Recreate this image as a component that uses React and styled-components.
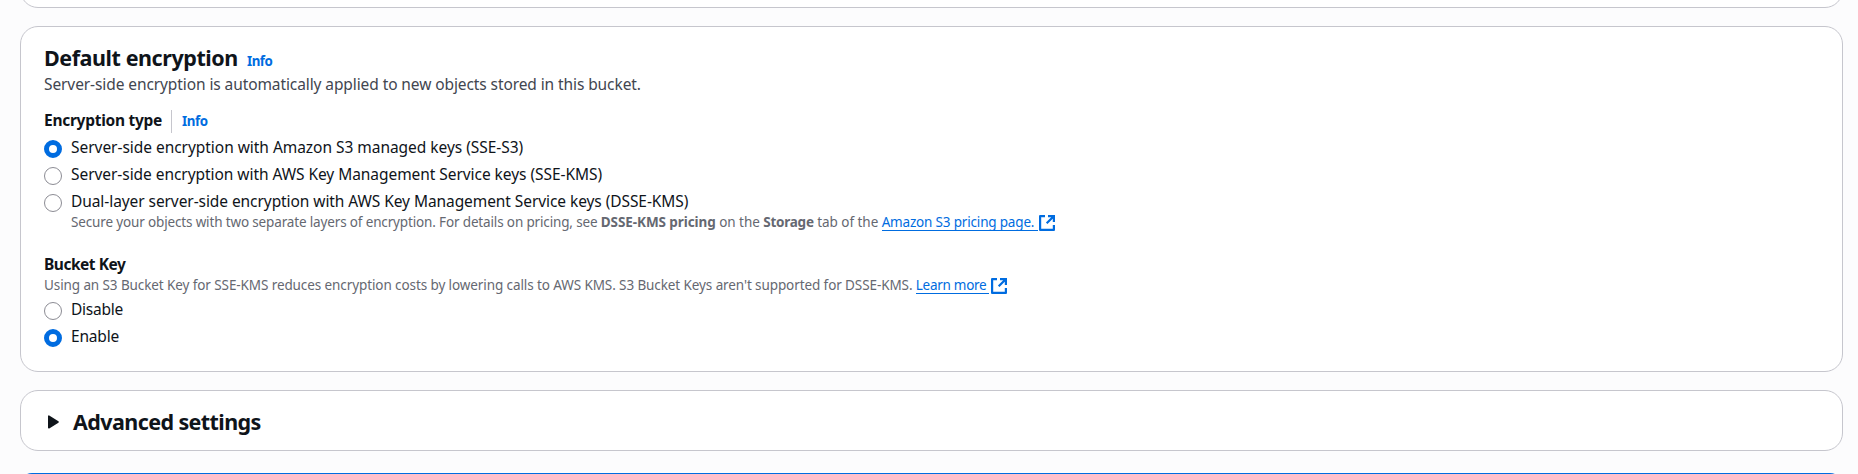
import React from "react";
import styled, { createGlobalStyle } from "styled-components";

const Global = createGlobalStyle`
  body {
    margin: 0;
    background: #fcfcfd;
    color: #0f141a;
    font-family: "Noto Sans", sans-serif;
    overflow: hidden;
  }
`;

const Page = styled.main`
  display: flex;
  flex-direction: column;
  height: 474px;
  overflow: hidden;
  padding: 0 15px 0 20px;
  box-sizing: border-box;
`;

const Panel = styled.section`
  flex: none;
  box-sizing: border-box;
  height: ${(p) => p.$height}px;
  margin-top: ${(p) => p.$gap}px;
  padding: ${(p) => p.$padding || "0"};
  background: #ffffff;
  border: 1px solid #c6c6cd;
  border-radius: 18px;
`;

const HeadingRow = styled.div`
  display: flex;
  align-items: baseline;
  gap: 9px;
`;

const Heading = styled.h2`
  margin: 0;
  font-size: 21.5px;
  line-height: 27px;
  font-weight: 700;
  letter-spacing: ${(p) => p.$tracking}px;
  white-space: nowrap;
`;

const InfoLink = styled.a`
  color: #006ce0;
  font-size: 13.3px;
  line-height: 18px;
  font-weight: 700;
  letter-spacing: -0.43px;
`;

const Description = styled.p`
  margin: 2px 0 14px;
  color: #424650;
  font-size: 15.5px;
  line-height: 22px;
  letter-spacing: -0.095px;
`;

const FieldLabel = styled.div`
  display: flex;
  align-items: baseline;
  height: 22px;
  font-size: 15.5px;
  line-height: 22px;
  font-weight: 700;
  letter-spacing: ${(p) => p.$tracking}px;
`;

const Divider = styled.span`
  align-self: flex-start;
  width: 1px;
  height: 23px;
  margin: 1px 10px 0 9px;
  background: #c6c6cd;
`;

const Options = styled.div`
  display: flex;
  flex-direction: column;
  gap: 5px;
  margin-top: ${(p) => p.$top}px;
`;

const Option = styled.label`
  display: flex;
  align-items: flex-start;
  gap: 9px;
`;

const Radio = styled.span`
  flex: none;
  box-sizing: border-box;
  width: 18px;
  height: 18px;
  margin-top: 4px;
  border-radius: 50%;
  background: #ffffff;
  border: ${(p) => (p.$checked ? "5.5px solid #006ce0" : "1px solid #8c8c94")};
`;

const OptionText = styled.div`
  font-size: 15.5px;
  line-height: 22px;
  letter-spacing: ${(p) => p.$tracking}px;
  white-space: nowrap;
`;

const Hint = styled.div`
  display: flex;
  height: 18px;
  margin-top: 1px;
  color: #656871;
  font-size: 13.5px;
  line-height: 18px;
  white-space: pre;
`;

const Run = styled.span`
  font-weight: ${(p) => (p.$bold ? 700 : 400)};
  letter-spacing: ${(p) => p.$tracking}px;
`;

const LinkText = styled.a`
  box-sizing: border-box;
  height: 18px;
  width: ${(p) => p.$width}px;
  color: #006ce0;
  border-bottom: 1px solid #006ce0;
  letter-spacing: ${(p) => p.$tracking}px;
`;

const IconSlot = styled.svg`
  flex: none;
  width: 16px;
  height: 16px;
  margin: 2px 0 0 ${(p) => p.$gap}px;
`;

const Group = styled.div`
  margin-top: ${(p) => p.$top}px;
`;

const ExpandRow = styled.div`
  display: flex;
  align-items: center;
  gap: 14px;
`;

const Caret = styled.svg`
  width: 12px;
  height: 14px;
  margin-top: 1px;
`;

const Banner = styled.div`
  flex: none;
  height: 24px;
  margin: 22px 1px 0 0;
  background: #006ce0;
  border-radius: 12px;
`;

function ExternalIcon({ gap }) {
  return (
    <IconSlot $gap={gap} viewBox="0 0 16 16" fill="none" stroke="#006ce0" strokeWidth="2.2">
      <path d="M6 1.1H1.1v13.8h13.8V10" strokeLinejoin="round" />
      <path d="M9 1.1h5.9V7M14.7 1.3L7.7 8.3" />
    </IconSlot>
  );
}

function RadioOption({ checked, tracking, label, children }) {
  return (
    <Option>
      <Radio $checked={checked} />
      <div>
        <OptionText $tracking={tracking}>{label}</OptionText>
        {children}
      </div>
    </Option>
  );
}

export default function App() {
  return (
    <>
      <Global />
      <Page>
        <Panel $height={48} $gap={-40} />
        <Panel $height={346} $gap={18} $padding="17px 23px">
          <HeadingRow>
            <Heading $tracking={-0.43}>Default encryption</Heading>
            <InfoLink>Info</InfoLink>
          </HeadingRow>
          <Description>
            Server-side encryption is automatically applied to new objects stored in this bucket.
          </Description>

          <FieldLabel $tracking={-0.27}>
            Encryption type
            <Divider />
            <InfoLink>Info</InfoLink>
          </FieldLabel>
          <Options $top={5}>
            <RadioOption
              checked
              tracking={-0.038}
              label="Server-side encryption with Amazon S3 managed keys (SSE-S3)"
            />
            <RadioOption
              tracking={-0.055}
              label="Server-side encryption with AWS Key Management Service keys (SSE-KMS)"
            />
            <RadioOption
              tracking={-0.075}
              label="Dual-layer server-side encryption with AWS Key Management Service keys (DSSE-KMS)"
            >
              <Hint>
                <Run $tracking={-0.15}>
                  {"Secure your objects with two separate layers of encryption. For details on pricing, see "}
                </Run>
                <Run $bold $tracking={-0.08}>DSSE-KMS pricing</Run>
                <Run $tracking={-0.04}>{" on the "}</Run>
                <Run $bold $tracking={-0.25}>Storage</Run>
                <Run $tracking={-0.04}>{" tab of the "}</Run>
                <LinkText $width={156} $tracking={-0.18}>Amazon S3 pricing page.</LinkText>
                <ExternalIcon gap={1} />
              </Hint>
            </RadioOption>
          </Options>

          <Group $top={22}>
            <FieldLabel $tracking={-0.48}>Bucket Key</FieldLabel>
            <Hint>
              <Run $tracking={-0.096}>
                {"Using an S3 Bucket Key for SSE-KMS reduces encryption costs by lowering calls to AWS KMS. S3 Bucket Keys aren't supported for DSSE-KMS. "}
              </Run>
              <LinkText $width={73} $tracking={-0.28}>Learn more</LinkText>
              <ExternalIcon gap={2} />
            </Hint>
            <Options $top={4}>
              <RadioOption tracking={-0.25} label="Disable" />
              <RadioOption checked tracking={-0.18} label="Enable" />
            </Options>
          </Group>
        </Panel>
        <Panel $height={61} $gap={18} $padding="17px 26px">
          <ExpandRow>
            <Caret viewBox="0 0 12 14">
              <path d="M1.8 1.2v11.6L11 7z" fill="#0f141a" stroke="#0f141a" strokeWidth="1.6" strokeLinejoin="round" />
            </Caret>
            <Heading $tracking={-0.59}>Advanced settings</Heading>
          </ExpandRow>
        </Panel>
        <Banner />
      </Page>
    </>
  );
}
